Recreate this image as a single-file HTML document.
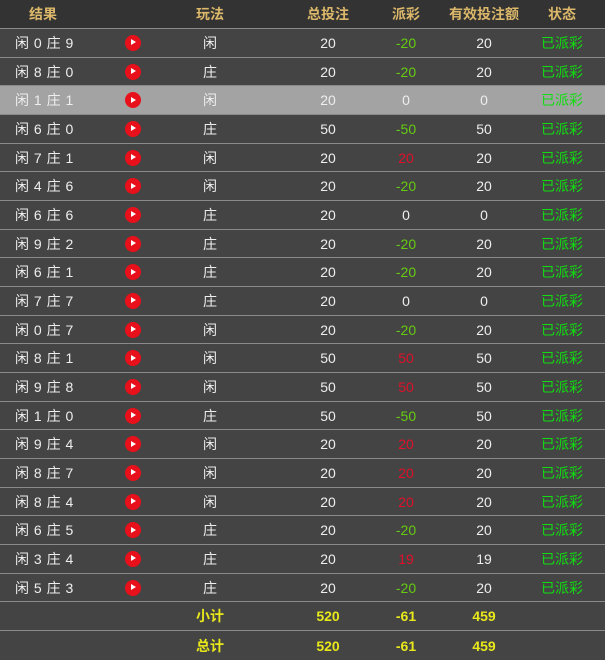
<!DOCTYPE html>
<html><head><meta charset="utf-8"><style>
body{margin:0;width:605px;height:651px;overflow:hidden;background:#444;font-family:"Liberation Sans","Noto Sans CJK SC",sans-serif;font-size:14px;color:#eee}
.hd{position:absolute;top:0;left:0;width:605px;height:28px;background:#333;color:#dcb86a;font-weight:bold}
.body{position:absolute;top:28px;left:0;width:605px;height:602px;display:flex;flex-direction:column}
.r{flex:1;position:relative;border-top:1px solid #8a8a8a;background:#444}
.tot{position:absolute;top:630px;left:0;width:605px;height:29px;border-top:1px solid #8a8a8a;background:#444}
.c{position:absolute;top:0;bottom:0;display:flex;align-items:center;justify-content:center;width:80px;margin-left:-40px}
.res{position:absolute;left:15px;top:0;bottom:0;display:flex;align-items:center;letter-spacing:0.5px}
.hd .c{height:28px}
.ic{position:absolute;left:125px;top:50%;margin-top:-8px;width:16px;height:16px;border-radius:50%;background:#e8101a}
.ic:after{content:"";position:absolute;left:6px;top:4.5px;border-left:5px solid #fff;border-top:3.5px solid transparent;border-bottom:3.5px solid transparent}
.g{color:#66cc11}.rd{color:#e0102a}.st{color:#11dd11}
.y{color:#e8e81a;font-weight:bold}
.hl{background:#a3a3a3}
</style></head><body>
<div class="hd">
<div class="c" style="left:43px">结果</div>
<div class="c" style="left:210px">玩法</div>
<div class="c" style="left:328px">总投注</div>
<div class="c" style="left:406px">派彩</div>
<div class="c" style="left:484px">有效投注额</div>
<div class="c" style="left:562px">状态</div>
</div>
<div class="body">
<div class="r"><span class="res">闲 0 庄 9</span><i class="ic"></i><span class="c" style="left:210px">闲</span><span class="c" style="left:328px">20</span><span class="c g" style="left:406px">-20</span><span class="c" style="left:484px">20</span><span class="c st" style="left:562px">已派彩</span></div>
<div class="r"><span class="res">闲 8 庄 0</span><i class="ic"></i><span class="c" style="left:210px">庄</span><span class="c" style="left:328px">20</span><span class="c g" style="left:406px">-20</span><span class="c" style="left:484px">20</span><span class="c st" style="left:562px">已派彩</span></div>
<div class="r hl"><span class="res">闲 1 庄 1</span><i class="ic"></i><span class="c" style="left:210px">闲</span><span class="c" style="left:328px">20</span><span class="c" style="left:406px">0</span><span class="c" style="left:484px">0</span><span class="c st" style="left:562px">已派彩</span></div>
<div class="r"><span class="res">闲 6 庄 0</span><i class="ic"></i><span class="c" style="left:210px">庄</span><span class="c" style="left:328px">50</span><span class="c g" style="left:406px">-50</span><span class="c" style="left:484px">50</span><span class="c st" style="left:562px">已派彩</span></div>
<div class="r"><span class="res">闲 7 庄 1</span><i class="ic"></i><span class="c" style="left:210px">闲</span><span class="c" style="left:328px">20</span><span class="c rd" style="left:406px">20</span><span class="c" style="left:484px">20</span><span class="c st" style="left:562px">已派彩</span></div>
<div class="r"><span class="res">闲 4 庄 6</span><i class="ic"></i><span class="c" style="left:210px">闲</span><span class="c" style="left:328px">20</span><span class="c g" style="left:406px">-20</span><span class="c" style="left:484px">20</span><span class="c st" style="left:562px">已派彩</span></div>
<div class="r"><span class="res">闲 6 庄 6</span><i class="ic"></i><span class="c" style="left:210px">庄</span><span class="c" style="left:328px">20</span><span class="c" style="left:406px">0</span><span class="c" style="left:484px">0</span><span class="c st" style="left:562px">已派彩</span></div>
<div class="r"><span class="res">闲 9 庄 2</span><i class="ic"></i><span class="c" style="left:210px">庄</span><span class="c" style="left:328px">20</span><span class="c g" style="left:406px">-20</span><span class="c" style="left:484px">20</span><span class="c st" style="left:562px">已派彩</span></div>
<div class="r"><span class="res">闲 6 庄 1</span><i class="ic"></i><span class="c" style="left:210px">庄</span><span class="c" style="left:328px">20</span><span class="c g" style="left:406px">-20</span><span class="c" style="left:484px">20</span><span class="c st" style="left:562px">已派彩</span></div>
<div class="r"><span class="res">闲 7 庄 7</span><i class="ic"></i><span class="c" style="left:210px">庄</span><span class="c" style="left:328px">20</span><span class="c" style="left:406px">0</span><span class="c" style="left:484px">0</span><span class="c st" style="left:562px">已派彩</span></div>
<div class="r"><span class="res">闲 0 庄 7</span><i class="ic"></i><span class="c" style="left:210px">闲</span><span class="c" style="left:328px">20</span><span class="c g" style="left:406px">-20</span><span class="c" style="left:484px">20</span><span class="c st" style="left:562px">已派彩</span></div>
<div class="r"><span class="res">闲 8 庄 1</span><i class="ic"></i><span class="c" style="left:210px">闲</span><span class="c" style="left:328px">50</span><span class="c rd" style="left:406px">50</span><span class="c" style="left:484px">50</span><span class="c st" style="left:562px">已派彩</span></div>
<div class="r"><span class="res">闲 9 庄 8</span><i class="ic"></i><span class="c" style="left:210px">闲</span><span class="c" style="left:328px">50</span><span class="c rd" style="left:406px">50</span><span class="c" style="left:484px">50</span><span class="c st" style="left:562px">已派彩</span></div>
<div class="r"><span class="res">闲 1 庄 0</span><i class="ic"></i><span class="c" style="left:210px">庄</span><span class="c" style="left:328px">50</span><span class="c g" style="left:406px">-50</span><span class="c" style="left:484px">50</span><span class="c st" style="left:562px">已派彩</span></div>
<div class="r"><span class="res">闲 9 庄 4</span><i class="ic"></i><span class="c" style="left:210px">闲</span><span class="c" style="left:328px">20</span><span class="c rd" style="left:406px">20</span><span class="c" style="left:484px">20</span><span class="c st" style="left:562px">已派彩</span></div>
<div class="r"><span class="res">闲 8 庄 7</span><i class="ic"></i><span class="c" style="left:210px">闲</span><span class="c" style="left:328px">20</span><span class="c rd" style="left:406px">20</span><span class="c" style="left:484px">20</span><span class="c st" style="left:562px">已派彩</span></div>
<div class="r"><span class="res">闲 8 庄 4</span><i class="ic"></i><span class="c" style="left:210px">闲</span><span class="c" style="left:328px">20</span><span class="c rd" style="left:406px">20</span><span class="c" style="left:484px">20</span><span class="c st" style="left:562px">已派彩</span></div>
<div class="r"><span class="res">闲 6 庄 5</span><i class="ic"></i><span class="c" style="left:210px">庄</span><span class="c" style="left:328px">20</span><span class="c g" style="left:406px">-20</span><span class="c" style="left:484px">20</span><span class="c st" style="left:562px">已派彩</span></div>
<div class="r"><span class="res">闲 3 庄 4</span><i class="ic"></i><span class="c" style="left:210px">庄</span><span class="c" style="left:328px">20</span><span class="c rd" style="left:406px">19</span><span class="c" style="left:484px">19</span><span class="c st" style="left:562px">已派彩</span></div>
<div class="r"><span class="res">闲 5 庄 3</span><i class="ic"></i><span class="c" style="left:210px">庄</span><span class="c" style="left:328px">20</span><span class="c g" style="left:406px">-20</span><span class="c" style="left:484px">20</span><span class="c st" style="left:562px">已派彩</span></div>
<div class="r"><span class="c y" style="left:210px">小计</span><span class="c y" style="left:328px">520</span><span class="c y" style="left:406px">-61</span><span class="c y" style="left:484px">459</span></div>
</div>
<div class="tot"><span class="c y" style="left:210px">总计</span><span class="c y" style="left:328px">520</span><span class="c y" style="left:406px">-61</span><span class="c y" style="left:484px">459</span></div>
</body></html>
